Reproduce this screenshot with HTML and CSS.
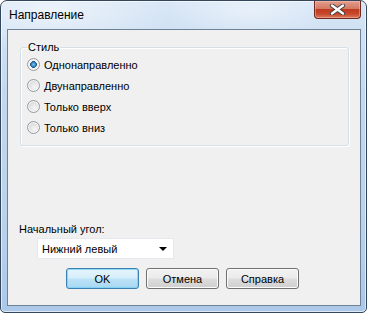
FILE: index.html
```html
<!DOCTYPE html>
<html lang="ru">
<head>
  <meta charset="UTF-8" />
  <title>Направление</title>
  <link rel="stylesheet" href="styles.css">
</head>
<body>
  <div class="window">
    <div class="title-bar">
      <div class="title">Направление</div>
      <div class="close-btn">
        <svg width="17" height="11" viewBox="0 0 17 11">
          <path d="M3 1.5 L14 9.5 M14 1.5 L3 9.5" stroke="#3b3b3b" stroke-width="4.2" stroke-linecap="round"/>
          <path d="M3 1.5 L14 9.5 M14 1.5 L3 9.5" stroke="#ffffff" stroke-width="2.4" stroke-linecap="round"/>
        </svg>
      </div>
    </div>
    <div class="client">
      <fieldset class="group">
        <legend>Стиль</legend>
        <div class="radio-row"><span class="radio checked"></span>Однонаправленно</div>
        <div class="radio-row"><span class="radio"></span>Двунаправленно</div>
        <div class="radio-row"><span class="radio"></span>Только вверх</div>
        <div class="radio-row"><span class="radio"></span>Только вниз</div>
      </fieldset>
      <div class="field-label">Начальный угол:</div>
      <div class="combo">
        <span>Нижний левый</span>
        <span class="arrow"></span>
      </div>
      <div class="buttons">
        <div class="btn default">OK</div>
        <div class="btn">Отмена</div>
        <div class="btn">Справка</div>
      </div>
    </div>
  </div>
</body>
</html>
```

FILE: styles.css
```css
body { margin: 0; background: #fff; font-family: 'Liberation Sans', Arial, sans-serif; font-size: 11px; color: #000; }

.window { width: 367px; height: 313px; box-sizing: border-box; border: 1px solid #34465c; border-radius: 7px 7px 5px 5px; padding: 0 5px 6px 6px; display: flex; flex-direction: column;
  background: radial-gradient(ellipse 120px 40px at 50px 10px, rgba(255,255,255,0.55), rgba(255,255,255,0) 100%),
              radial-gradient(ellipse 90px 30px at 250px 8px, rgba(255,255,255,0.45), rgba(255,255,255,0) 100%),
              linear-gradient(to bottom, #d7e6f6 0%, #c3d8ef 30%, #bad2ec 70%, #abc8e9 100%);
  box-shadow: inset 0 0 0 1px rgba(255,255,255,0.6); }

.title-bar { height: 28px; display: flex; justify-content: space-between; align-items: flex-start; }
.title { font-size: 12px; padding: 7px 0 0 2px; line-height: 15px; }
.close-btn { width: 47px; height: 18px; box-sizing: border-box; border: 1px solid #6d2a20; border-top: none; border-radius: 0 0 4px 4px; display: flex; align-items: center; justify-content: center;
  background: linear-gradient(to bottom, #e39d8c 0%, #d37a63 45%, #c13a20 50%, #c8472b 75%, #dc7a5c 100%);
  box-shadow: inset 0 0 0 1px rgba(255,210,200,0.4); }

.client { flex: 1; border: 1px solid #6f8195; background: #f0f0f0; display: flex; flex-direction: column; align-items: flex-start; }

.group { margin: 11px 0 0 12px; width: 329px; height: 105px; box-sizing: border-box; padding: 0 6px 6px 6px; border: 1px solid #d5dfe5; border-radius: 3px; box-shadow: inset 1px 1px 0 #fff, 1px 1px 0 #fff; }
.group legend { padding: 0 1px; line-height: 13px; }

.radio-row { height: 21px; display: flex; align-items: center; gap: 4px; }
.radio { width: 13px; height: 13px; box-sizing: border-box; border-radius: 50%; border: 1px solid #979a9e;
  background: radial-gradient(circle at 60% 65%, #f6f6f6 0%, #e0e0e0 55%, #cdcdcd 100%);
  box-shadow: inset 0 0 0 1px #f8f8f8; }
.radio.checked { background: radial-gradient(circle at 50% 50%, #79c4ee 0%, #2c84c2 28%, #1b4f7b 40%, #f2f2f2 44%, #dcdcdc 100%); }

.field-label { margin: 77px 0 0 11px; line-height: 13px; }

.combo { margin: 2px 0 0 29px; width: 137px; height: 21px; box-sizing: border-box; border: 1px solid #e6e8ed; background: #fff; display: flex; align-items: center; justify-content: space-between; padding: 0 6px 0 4px; }
.arrow { width: 0; height: 0; border-left: 4px solid transparent; border-right: 4px solid transparent; border-top: 4px solid #000; }

.buttons { margin: 9px 0 0 58px; display: flex; gap: 7px; }
.btn { width: 73px; height: 21px; box-sizing: border-box; border: 1px solid #707070; border-radius: 3px; display: flex; align-items: center; justify-content: center;
  background: linear-gradient(to bottom, #f2f2f2 0%, #ebebeb 48%, #dddddd 52%, #cfcfcf 100%);
  box-shadow: inset 0 0 0 1px #fcfcfc; }
.btn.default { border-color: #3c7fb1;
  background: linear-gradient(to bottom, #e5f4fc 0%, #d6eefb 48%, #bde4f8 52%, #a8d7f1 100%);
  box-shadow: inset 0 0 0 1px rgba(120,210,245,0.8); }
```
